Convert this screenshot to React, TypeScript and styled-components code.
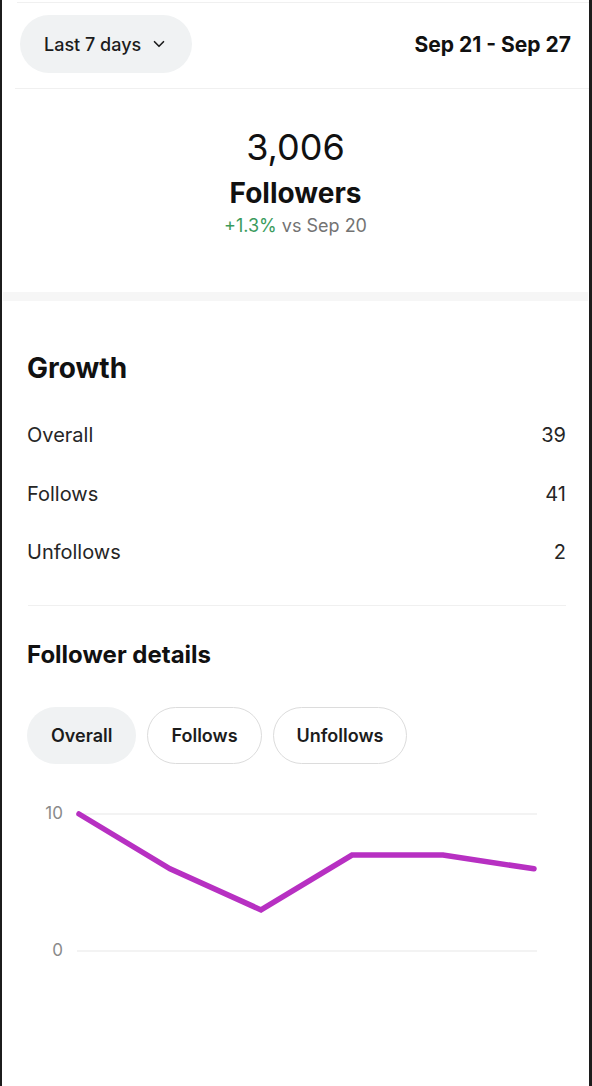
import React from "react";
import styled, { createGlobalStyle } from "styled-components";
import { ChevronDown } from "lucide-react";

const GlobalStyle = createGlobalStyle`
  * { box-sizing: border-box; }
  body {
    margin: 0;
    background: #ffffff;
    font-family: Inter, "Noto Sans", "Liberation Sans", sans-serif;
    color: #1c1c1c;
    -webkit-font-smoothing: antialiased;
  }
`;

const growthRows = [
  { label: "Overall", value: 39 },
  { label: "Follows", value: 41 },
  { label: "Unfollows", value: 2 },
];

const chips = ["Overall", "Follows", "Unfollows"];

// daily net follower counts, Sep 21 - Sep 26
const series = [10, 6, 3, 7, 7, 6];

const FollowerChart: React.FC<{ data: number[] }> = ({ data }) => {
  const top = 30;
  const bottom = 167;
  const left = 52;
  const right = 507;
  const step = (right - left) / (data.length - 1);
  const points = data
    .map((v, i) => `${left + i * step},${bottom - (v / 10) * (bottom - top)}`)
    .join(" ");

  return (
    <ChartSvg width="539" height="190" viewBox="0 0 539 190">
      <line x1="50" x2="510" y1={top} y2={top} stroke="#efefef" strokeWidth="1.5" />
      <line x1="50" x2="510" y1={bottom} y2={bottom} stroke="#efefef" strokeWidth="1.5" />
      <AxisText x="36" y={top} textAnchor="end" dominantBaseline="middle">
        10
      </AxisText>
      <AxisText x="36" y={bottom} textAnchor="end" dominantBaseline="middle">
        0
      </AxisText>
      <polyline
        points={points}
        fill="none"
        stroke="#b730c2"
        strokeWidth="5.5"
        strokeLinecap="round"
        strokeLinejoin="miter"
      />
    </ChartSvg>
  );
};

const App: React.FC = () => {
  return (
    <Frame>
      <GlobalStyle />
      <Rule $left={15} />
      <Header>
        <RangeButton>
          Last 7 days
          <ChevronDown size={18} strokeWidth={2.2} />
        </RangeButton>
        <DateRange>Sep 21 - Sep 27</DateRange>
      </Header>
      <Rule $left={13} />

      <Summary>
        <BigNumber>3,006</BigNumber>
        <SummaryLabel>Followers</SummaryLabel>
        <Change>
          <Positive>+1.3%</Positive> vs Sep 20
        </Change>
      </Summary>

      <Band />

      <Section>
        <SectionTitle>Growth</SectionTitle>
        <Rows>
          {growthRows.map((row) => (
            <Row key={row.label}>
              <span>{row.label}</span>
              <span>{row.value}</span>
            </Row>
          ))}
        </Rows>
        <Divider />
        <SubTitle>Follower details</SubTitle>
        <Chips>
          {chips.map((c, i) => (
            <Chip key={c} $active={i === 0}>
              {c}
            </Chip>
          ))}
        </Chips>
        <FollowerChart data={series} />
      </Section>
    </Frame>
  );
};

export default App;

const Frame = styled.div`
  min-height: 1086px;
  border-left: 2px solid #1c1c1c;
  border-right: 3px solid #1c1c1c;
  background: #ffffff;
  padding-top: 2px;
`;

const Rule = styled.div<{ $left: number }>`
  height: 1px;
  margin-left: ${(p) => p.$left}px;
  background: #f0f0f0;
`;

const Header = styled.header`
  display: flex;
  align-items: center;
  justify-content: space-between;
  padding: 12px 18px 15px 18px;
`;

const RangeButton = styled.button`
  display: flex;
  align-items: center;
  gap: 9px;
  height: 58px;
  padding: 0 24px 0 24px;
  border: none;
  border-radius: 29px;
  background: #f0f2f3;
  font-family: inherit;
  font-size: 18px;
  font-weight: 500;
  color: #1c1c1c;
`;

const DateRange = styled.div`
  font-size: 21px;
  font-weight: 700;
  color: #111111;
`;

const Summary = styled.div`
  display: flex;
  flex-direction: column;
  align-items: center;
  padding: 37px 0 55px;
`;

const BigNumber = styled.div`
  font-size: 36px;
  line-height: 42px;
  font-weight: 400;
  color: #111111;
`;

const SummaryLabel = styled.div`
  margin-top: 8px;
  font-size: 28px;
  line-height: 34px;
  font-weight: 700;
  color: #111111;
`;

const Change = styled.div`
  margin-top: 5px;
  font-size: 18px;
  line-height: 22px;
  color: #737373;
`;

const Positive = styled.span`
  color: #3a9b5c;
`;

const Band = styled.div`
  height: 9px;
  margin: 0 1px;
  background: #f6f6f6;
`;

const Section = styled.section`
  display: flex;
  flex-direction: column;
  padding: 50px 23px 0 25px;
`;

const SectionTitle = styled.h2`
  margin: 0;
  font-size: 28px;
  line-height: 34px;
  font-weight: 700;
  color: #111111;
`;

const Rows = styled.div`
  display: flex;
  flex-direction: column;
  margin-top: 21px;
`;

const Row = styled.div`
  display: flex;
  align-items: center;
  justify-content: space-between;
  height: 58.5px;
  font-size: 20px;
  color: #262626;
`;

const Divider = styled.div`
  height: 1px;
  margin: 23px 0 0 1px;
  background: #f0f0f0;
`;

const SubTitle = styled.h3`
  margin: 34px 0 0;
  font-size: 24px;
  line-height: 30px;
  font-weight: 700;
  color: #111111;
`;

const Chips = styled.div`
  display: flex;
  gap: 11px;
  margin-top: 37px;
`;

const Chip = styled.button<{ $active?: boolean }>`
  height: 57px;
  padding: 0 23px;
  border-radius: 29px;
  border: 1px solid ${(p) => (p.$active ? "transparent" : "#dcdcdc")};
  background: ${(p) => (p.$active ? "#f0f2f3" : "#ffffff")};
  font-family: inherit;
  font-size: 18px;
  font-weight: 600;
  color: #1c1c1c;
`;

const ChartSvg = styled.svg`
  display: block;
  margin-top: 20px;
`;

const AxisText = styled.text`
  font-family: Inter, "Liberation Sans", sans-serif;
  font-size: 17px;
  fill: #8a8a8a;
`;
